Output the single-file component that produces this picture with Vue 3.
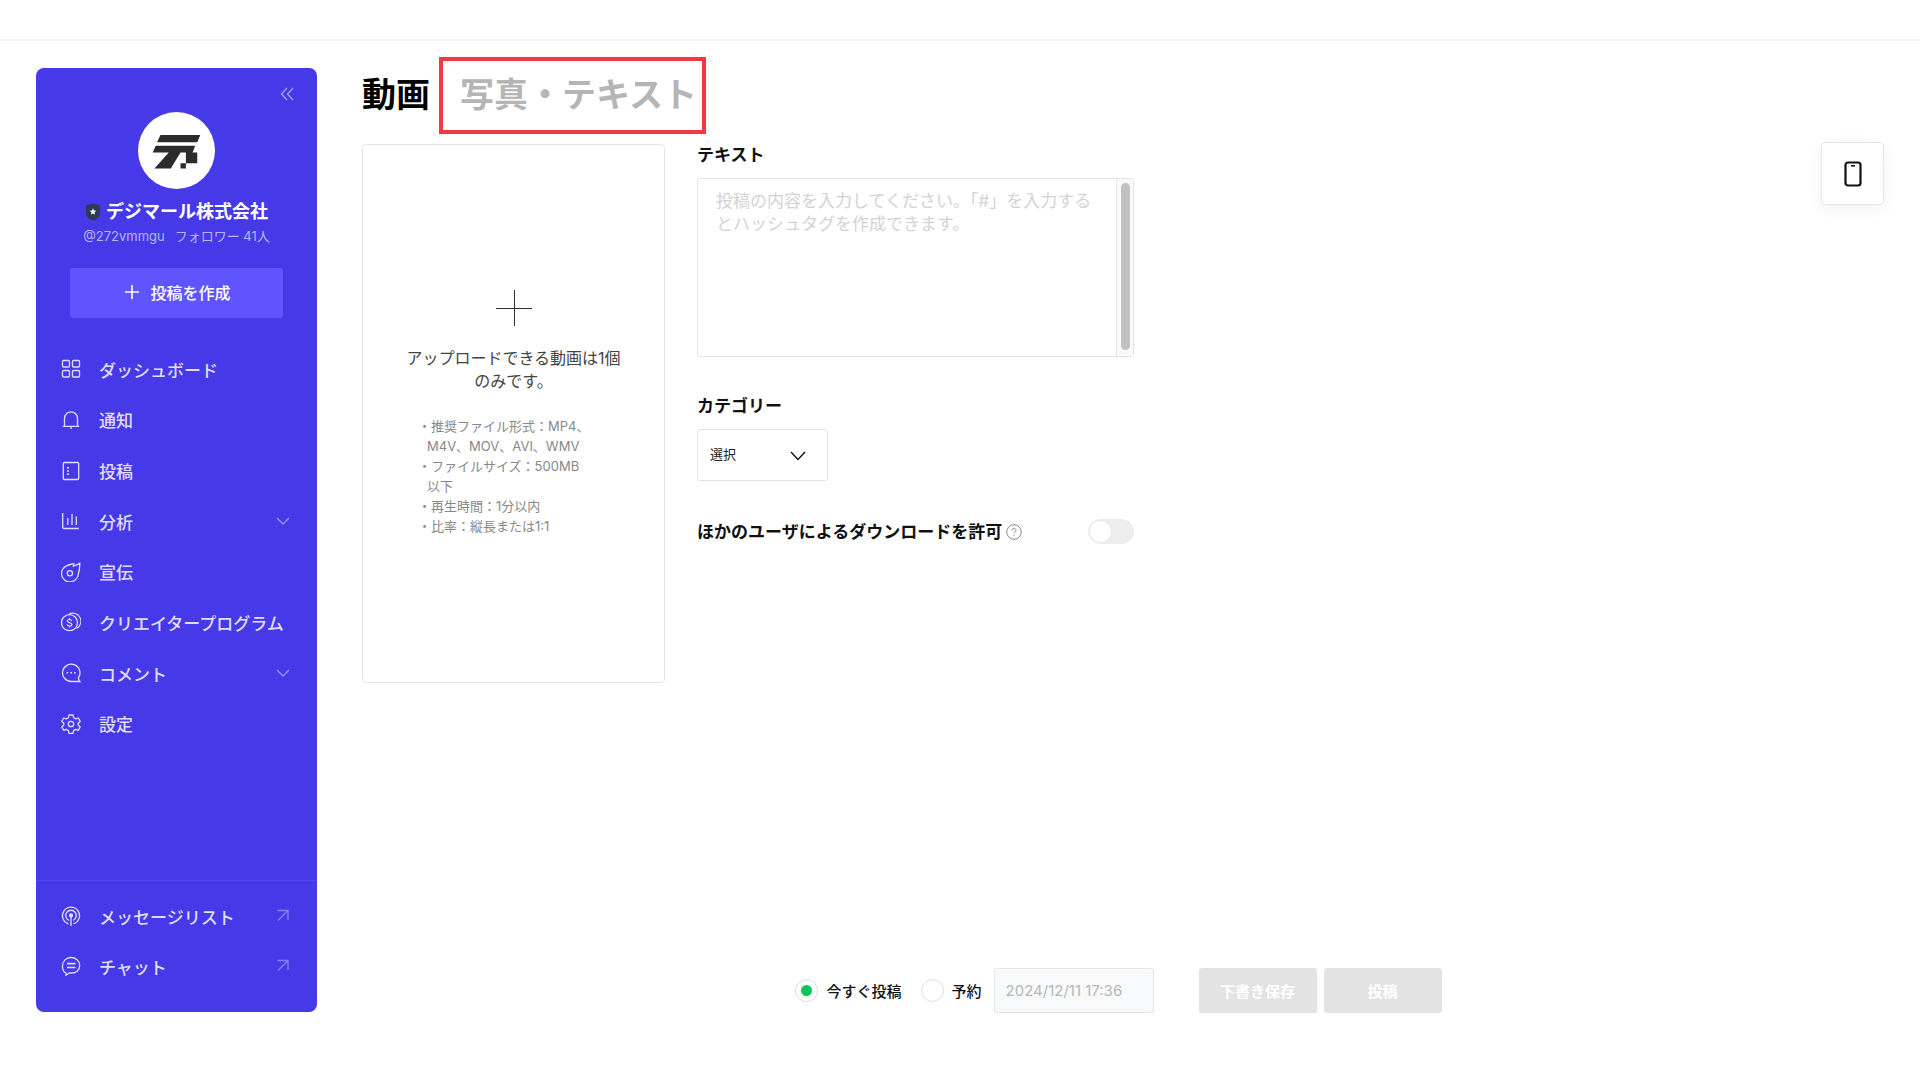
<script setup>
import { ref } from 'vue'

const menu = [
  { label: 'ダッシュボード', icon: 'grid' },
  { label: '通知', icon: 'bell' },
  { label: '投稿', icon: 'post' },
  { label: '分析', icon: 'chart', expandable: true },
  { label: '宣伝', icon: 'promo' },
  { label: 'クリエイタープログラム', icon: 'coin' },
  { label: 'コメント', icon: 'comment', expandable: true },
  { label: '設定', icon: 'gear' },
]

const links = [
  { label: 'メッセージリスト', icon: 'broadcast' },
  { label: 'チャット', icon: 'chat' },
]

const icons = {
  grid: '<rect x="1.5" y="1.5" width="7" height="6.5" rx="1"/><rect x="11.5" y="1.5" width="7" height="6.5" rx="1"/><rect x="1.5" y="11.5" width="7" height="6.5" rx="1"/><rect x="11.5" y="11.5" width="7" height="6.5" rx="1"/>',
  bell: '<path d="M1.8 16.3H18.2M3.5 16.3V8.5a6.5 6.7 0 0 1 13 0V16.3M10 16.5V19"/>',
  post: '<rect x="2.3" y="1.5" width="15.4" height="17" rx="1"/><path d="M6 6.8h2M6 10h2M6 13.2h2" stroke-width="1.6"/>',
  chart: '<path d="M1.7 2V16.500a1 1 0 0 0 1 1H17.8M6.8 7v7M11 3v11M15.3 5.5V14"/>',
  promo: '<path d="M18.7 1.3C18.9 6 18.3 8.8 17.3 12A8.400 8.400 0 1 1 6 3.600C8.300 2.500 10.300 2.300 12.600 1.500L12.300 4C14.800 3.500 16.800 2.600 18.700 1.300Z"/><circle cx="8.900" cy="11.200" r="2.600"/>',
  coin: '<circle cx="8.500" cy="10.700" r="8"/><path d="M8 2.100A7.900 7.900 0 0 1 15.500 16.500M8 2.100A8 8 0 1 1 15.500 16.500" stroke-width="1.100"/><path d="M10.700 9c-.2-1-1-1.500-2.200-1.500-1.300 0-2.200.6-2.200 1.500 0 2.200 4.500 1.200 4.500 3.400 0 1-1 1.600-2.300 1.600s-2.200-.6-2.300-1.600M8.500 6v1.500M8.500 14v1.500" stroke-width="1.200"/>',
  comment: '<path d="M18.800 18.500H10.200A8.700 8.700 0 1 1 17.400 14.800C17.300 16 18 17.500 18.800 18.500Z"/><path d="M5.600 9.800h1.600M9.300 9.800h1.600M13 9.800h1.600" stroke-width="1.600"/>',
  gear: '<circle cx="10" cy="10" r="2.700"/><path d="M8 1h4l.6 2.700 2.100 1.200 2.600-.9 1.900 3.400-2 1.800v1.900l2 1.800-1.900 3.400-2.600-.9-2.100 1.200L12 19.300H8l-.6-2.700-2.100-1.200-2.600.9L.8 12.900l2-1.800V9.200l-2-1.800L2.700 4l2.600.9 2.100-1.200Z" stroke-linejoin="round"/>',
  broadcast: '<path d="M7.500 17.800a8.500 8.500 0 1 1 5 0M7.700 14.300a5.300 5.300 0 1 1 4.600 0M10 9.500V20"/><circle cx="10" cy="9.500" r="1.500" fill="currentColor"/>',
  chat: '<path d="M5 17.300A8.600 8.400 0 0 1 1.500 10C1.500 5 5.300 1.500 10 1.500S18.700 5 18.700 9.500 15.300 17 10.800 17H8.300L5 19.200Z"/><path d="M6 7.600h8.500M6 11.500h8.500" stroke-width="1.600"/>',
}

const message = ref('')
const category = ref('')
const allowDownload = ref(false)
const timing = ref('now')
const schedule = ref('2024/12/11 17:36')
</script>

<template>
  <div class="page">
    <header class="topbar"></header>
    <div class="body">
      <aside class="sidebar">
        <button class="collapse" type="button" aria-label="メニューを閉じる">
          <svg viewBox="0 0 20 20"><path d="M10 4 4.500 10l5.500 6M16 4l-5.500 6 5.500 6" /></svg>
        </button>
        <div class="avatar">
          <svg viewBox="0 0 230 230">
            <path d="M67 69H186L177 90H57Z" />
            <path d="M53 101H171L163 121H177V153H143V169H127V153H143V121H127L98 169H49L92 121H44Z" />
          </svg>
        </div>
        <p class="account">
          <svg class="shield" viewBox="0 0 16 18">
            <path d="M8 .5 15 2.500V10c0 4-3 6-7 7.700C4 16 1 14 1 10V2.500Z" fill="#2f3a57" />
            <path d="m8 5.300 1 2.100 2.300.3-1.700 1.600.4 2.300L8 10.500l-2 1.100.4-2.300-1.700-1.600L7 7.400Z" fill="#fff" />
          </svg>
          <strong>デジマール株式会社</strong>
        </p>
        <p class="handle"><span>@272vmmgu</span><span>フォロワー 41人</span></p>
        <button class="create" type="button">
          <svg viewBox="0 0 14 14"><path d="M7 0v14M0 7h14" /></svg>
          投稿を作成
        </button>
        <nav class="menu primary">
          <a v-for="item in menu" :key="item.label" href="#">
            <svg class="icon" viewBox="0 0 20 20" v-html="icons[item.icon]"></svg>
            <span>{{ item.label }}</span>
            <svg v-if="item.expandable" class="mark" viewBox="0 0 14 14"><path d="m1 4 6 6 6-6" /></svg>
          </a>
        </nav>
        <nav class="menu external">
          <a v-for="item in links" :key="item.label" href="#">
            <svg class="icon" viewBox="0 0 20 20" v-html="icons[item.icon]"></svg>
            <span>{{ item.label }}</span>
            <svg class="mark faint" viewBox="0 0 14 14"><path d="M1.500 1.500h10.500v9.500M12 1.500 2 11.500" /></svg>
          </a>
        </nav>
      </aside>

      <main class="main">
        <div class="tabs">
          <button class="tab active" type="button">動画</button>
          <button class="tab marked" type="button">写真・テキスト</button>
        </div>

        <div class="workspace">
          <div class="editor">
            <button class="upload" type="button">
              <svg class="plus" viewBox="0 0 36 36"><path d="M18.500 0v36M0 18.500h36" /></svg>
              <span class="lead">アップロードできる動画は1個のみです。</span>
              <span class="specs">
                <span>・推奨ファイル形式：MP4、M4V、MOV、AVI、WMV</span>
                <span>・ファイルサイズ：500MB以下</span>
                <span>・再生時間：1分以内</span>
                <span>・比率：縦長または1:1</span>
              </span>
            </button>

            <form class="form" @submit.prevent>
              <label class="label" for="message">テキスト</label>
              <div class="textbox">
                <textarea
                  id="message"
                  v-model="message"
                  placeholder="投稿の内容を入力してください。「#」を入力するとハッシュタグを作成できます。"
                ></textarea>
                <div class="track"><div class="thumb"></div></div>
              </div>

              <label class="label spaced" for="category">カテゴリー</label>
              <div class="select">
                <select id="category" v-model="category">
                  <option value="">選択</option>
                </select>
                <svg viewBox="0 0 16 10"><path d="m1 1 7 7.500L15 1" /></svg>
              </div>

              <div class="download">
                <label class="label" for="download">ほかのユーザによるダウンロードを許可</label>
                <svg class="help" viewBox="0 0 16 16">
                  <circle cx="8" cy="8" r="7.300" />
                  <path d="M6 6.600C6 5.200 6.800 4.500 8 4.500s2 .7 2 1.800c0 1.400-2 1.500-2 3M8 10.700v1.200" />
                </svg>
                <input id="download" v-model="allowDownload" class="toggle" type="checkbox" role="switch" />
              </div>
            </form>
          </div>

          <button class="preview" type="button" aria-label="プレビュー">
            <svg viewBox="0 0 18 26">
              <rect x="1.500" y="1.500" width="15" height="23" rx="2.500" />
              <path d="M7 4.800h4" />
            </svg>
          </button>
        </div>

        <footer class="actions">
          <label class="choice"><input v-model="timing" type="radio" name="timing" value="now" />今すぐ投稿</label>
          <label class="choice later"><input v-model="timing" type="radio" name="timing" value="later" />予約</label>
          <input v-model="schedule" class="date" type="text" aria-label="予約日時" disabled />
          <button class="submit draft" type="button" disabled>下書き保存</button>
          <button class="submit" type="button" disabled>投稿</button>
        </footer>
      </main>
    </div>
  </div>
</template>

<style>
body {
  margin: 0;
  background: #fff;
}
</style>

<style scoped>
.page {
  display: flex;
  flex-direction: column;
  min-height: 100vh;
  color: #111;
  font-family: Inter, "Noto Sans CJK JP", sans-serif;
}

.page *,
.page *::before {
  box-sizing: border-box;
}

button,
input,
select,
textarea {
  margin: 0;
  font-family: inherit;
}

button {
  padding: 0;
  border: 0;
  background: none;
  cursor: pointer;
}

p {
  margin: 0;
}

svg {
  flex: none;
  fill: none;
}

.topbar {
  height: 41px;
  border-bottom: 2px solid #f7f7f7;
}

.body {
  display: flex;
  flex: 1;
  padding-bottom: 67px;
}

.sidebar {
  display: flex;
  flex: none;
  flex-direction: column;
  align-items: center;
  width: 281px;
  margin: 27px 0 1px 36px;
  padding: 16px 0 21px;
  border-radius: 8px;
  background: #4539e8;
  color: #fff;
}

.collapse {
  align-self: flex-end;
  width: 20px;
  height: 20px;
  margin-right: 20px;
}

.collapse svg {
  display: block;
  stroke: #a49df5;
  stroke-width: 1.4;
}

.avatar {
  flex: none;
  width: 77px;
  height: 77px;
  margin-top: 8px;
  border-radius: 50%;
  background: #fff;
}

.avatar svg {
  display: block;
}

.avatar path {
  fill: #2b2b2b;
}

.account {
  display: flex;
  align-items: center;
  gap: 5px;
  margin-top: 11px;
  font-size: 18px;
  line-height: 24px;
}

.shield {
  width: 16px;
  height: 18px;
}

.handle {
  display: flex;
  gap: 10px;
  margin-top: 2px;
  color: #b9b4f8;
  font-size: 13px;
  line-height: 20px;
}

.create {
  display: flex;
  align-items: center;
  justify-content: center;
  gap: 11px;
  width: 213px;
  height: 50px;
  margin-top: 22px;
  padding: 0 0 2px 3px;
  border-radius: 3px;
  background: #6054ff;
  color: #fff;
  font-size: 16px;
  font-weight: 500;
}

.create svg {
  width: 14px;
  height: 14px;
  stroke: #fff;
  stroke-width: 1.6;
}

.menu {
  display: grid;
  grid-auto-rows: 1fr;
  align-self: stretch;
}

.menu a {
  display: flex;
  align-items: center;
  min-height: 50px;
  padding: 0 27px 0 25px;
  color: #e0ddfc;
  font-size: 17px;
  font-weight: 500;
  text-decoration: none;
  white-space: nowrap;
}

.icon {
  width: 20px;
  height: 20px;
  margin-right: 18px;
  stroke: currentColor;
  stroke-width: 1.3;
}

.mark {
  width: 14px;
  height: 14px;
  margin-left: auto;
  stroke: #9b94f5;
  stroke-width: 1.3;
}

.mark.faint {
  stroke: #8880f3;
}

.primary {
  height: 405px;
  margin-top: 26px;
}

.external {
  margin-top: auto;
  padding-top: 10px;
  border-top: 1px solid #5348ea;
}

.main {
  display: flex;
  flex: 1;
  flex-direction: column;
  min-width: 0;
}

.tabs {
  display: flex;
  align-items: center;
  gap: 9px;
  padding: 16px 36px 0 45px;
}

.tab {
  padding-bottom: 2px;
  color: #b5b5b5;
  font-size: 34px;
  font-weight: 700;
  line-height: 67px;
}

.tab.active {
  color: #000;
}

.tab.marked {
  padding: 0 5px 2px 17px;
  border: 4px solid #f03a3f;
}

.workspace {
  display: flex;
  align-items: flex-start;
  justify-content: space-between;
  margin-top: 8px;
  padding: 0 36px 32px 45px;
}

.editor {
  display: flex;
  align-items: flex-start;
  gap: 32px;
  margin-top: 2px;
}

.upload {
  display: flex;
  flex-direction: column;
  align-items: center;
  width: 303px;
  height: 539px;
  padding-top: 145px;
  border: 1px solid #e6e6e6;
  border-radius: 4px;
}

.plus {
  width: 36px;
  height: 36px;
  stroke: #333;
  stroke-width: 1;
}

.lead {
  width: 220px;
  margin-top: 21px;
  color: #444;
  font-size: 16px;
  line-height: 23px;
}

.specs {
  align-self: flex-start;
  width: 172px;
  margin: 23px 0 0 55px;
  color: #888;
  font-size: 13px;
  line-height: 20px;
  text-align: left;
}

.specs span {
  display: block;
  padding-left: 9px;
  text-indent: -9px;
}

.form {
  width: 437px;
}

.label {
  display: block;
  color: #111;
  font-size: 17px;
  font-weight: 700;
  line-height: 22px;
}

.label.spaced {
  margin-top: 38px;
}

.textbox {
  display: flex;
  height: 179px;
  margin-top: 12px;
  overflow: hidden;
  border: 1px solid #e3e3e3;
  border-radius: 3px;
}

.textbox textarea {
  flex: 1;
  min-width: 0;
  padding: 11px 12px 11px 18px;
  overflow: hidden;
  border: 0;
  outline: 0;
  background: none;
  color: #111;
  font-size: 17px;
  line-height: 23px;
  resize: none;
}

.textbox textarea::placeholder {
  color: #d3d3d3;
}

.track {
  width: 17px;
  padding: 4px 3px 6px 4px;
  border-left: 1px solid #e8e8e8;
  background: #fafafa;
}

.thumb {
  height: 100%;
  border-radius: 5px;
  background: #c1c1c1;
}

.select {
  position: relative;
  width: 131px;
  height: 52px;
  margin-top: 12px;
}

.select select {
  width: 100%;
  height: 100%;
  padding: 0 12px 2px;
  border: 1px solid #e3e3e3;
  border-radius: 3px;
  background: #fff;
  color: #222;
  font-size: 13px;
  appearance: none;
}

.select svg {
  position: absolute;
  top: 22px;
  right: 22px;
  width: 16px;
  height: 10px;
  stroke: #111;
  stroke-width: 1.4;
  pointer-events: none;
}

.download {
  display: flex;
  align-items: center;
  margin-top: 38px;
}

.help {
  width: 16px;
  height: 16px;
  margin-left: 4px;
  stroke: #888;
  stroke-width: 1;
}

.toggle {
  width: 46px;
  height: 25px;
  margin-left: auto;
  padding: 2px;
  border-radius: 13px;
  background: #ededed;
  appearance: none;
}

.toggle::before {
  display: block;
  width: 21px;
  height: 21px;
  border-radius: 50%;
  background: #fff;
  content: "";
}

.toggle:checked {
  padding-left: 23px;
  background: #06c755;
}

.preview {
  display: flex;
  align-items: center;
  justify-content: center;
  width: 63px;
  height: 63px;
  border: 1px solid #e6e6e6;
  border-radius: 4px;
  box-shadow: 0 4px 16px rgba(0, 0, 0, 0.06);
}

.preview svg {
  width: 18px;
  height: 26px;
  stroke: #111;
  stroke-width: 2.2;
}

.preview path {
  stroke-width: 1.6;
}

.actions {
  display: flex;
  align-items: center;
  justify-content: center;
  margin-top: auto;
}

.choice {
  display: flex;
  align-items: center;
  gap: 8px;
  color: #111;
  font-size: 15px;
  font-weight: 500;
}

.choice.later {
  margin: 0 12px 0 19px;
}

.choice input {
  display: flex;
  align-items: center;
  justify-content: center;
  width: 23px;
  height: 23px;
  border: 1px solid #dedede;
  border-radius: 50%;
  appearance: none;
}

.choice input:checked::before {
  width: 11px;
  height: 11px;
  border-radius: 50%;
  background: #06c755;
  content: "";
}

.date {
  width: 160px;
  height: 45px;
  padding: 0 11px;
  border: 1px solid #e3e5e8;
  border-radius: 3px;
  background: #f8f9fb;
  color: #b7b7b7;
  font-size: 15px;
}

.submit {
  width: 118px;
  height: 45px;
  border-radius: 3px;
  background: #e3e3e3;
  color: #fff;
  font-size: 15px;
  font-weight: 700;
}

.submit.draft {
  margin: 0 7px 0 45px;
}
</style>
